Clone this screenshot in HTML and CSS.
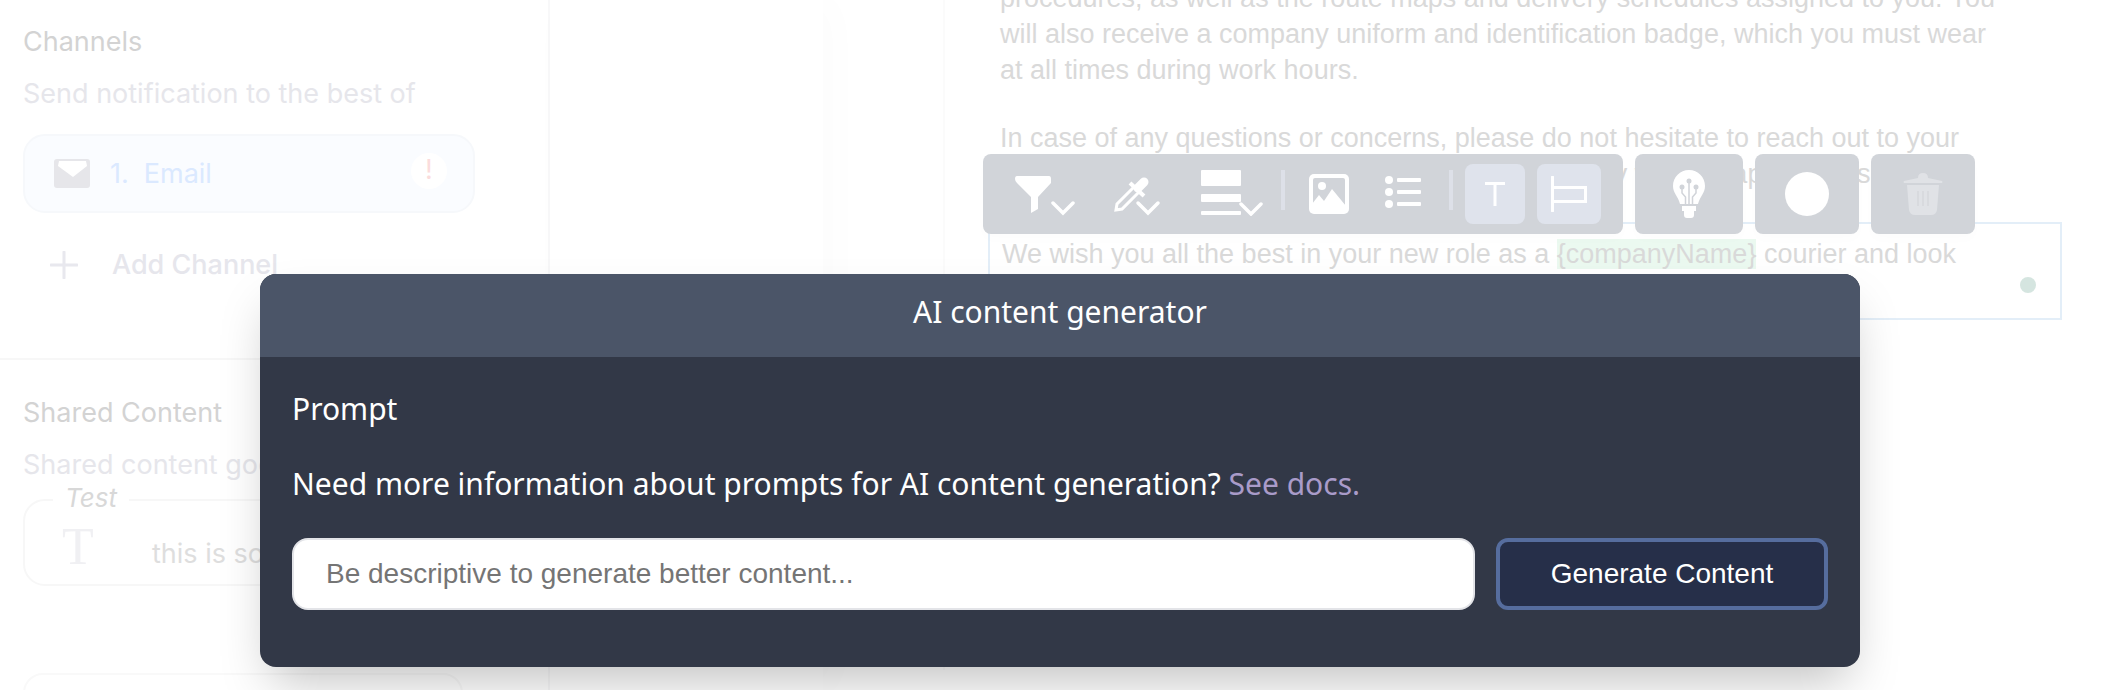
FILE: index.html
```html
<!DOCTYPE html>
<html lang="en">
<head>
    <meta charset="UTF-8">
    <meta name="viewport" content="width=device-width, initial-scale=1.0">
    <title>AI content generator</title>
    <link rel="stylesheet" href="styles.css">
</head>
<body>

<div class="app">
    <!-- Left settings column -->
    <aside class="sidebar">
        <section class="side-top">
            <h3 class="side-title">Channels</h3>
            <p class="side-note">Send notification to the best of</p>
            <div class="channel-card">
                <svg class="mail-icon" viewBox="0 0 36 29">
                    <rect width="36" height="29" rx="3" fill="#e6e6ea"/>
                    <path d="M5 2H32L33 7L19 18L4 7Z" fill="#fff"/>
                </svg>
                <span class="channel-num">1.</span>
                <span class="channel-name">Email</span>
                <span class="channel-alert">!</span>
            </div>
            <div class="add-channel">
                <svg class="plus-icon" viewBox="0 0 28 28">
                    <path d="M14 1V27M1 14H27" stroke="#e8e8ee" stroke-width="3" stroke-linecap="round"/>
                </svg>
                <span>Add Channel</span>
            </div>
        </section>
        <section class="side-bottom">
            <h3 class="side-title">Shared Content</h3>
            <p class="side-note">Shared content goes here</p>
            <div class="shared-card">
                <span class="shared-legend">Test</span>
                <span class="shared-t">T</span>
                <span class="shared-text">this is some shared content</span>
            </div>
            <div class="shared-next"></div>
        </section>
    </aside>

    <div class="spacer"></div>

    <!-- Email body -->
    <main class="main">
        <div class="letter">
            <p>procedures, as well as the route maps and delivery schedules assigned to you. You<br>will also receive a company uniform and identification badge, which you must wear<br>at all times during work hours.</p>
            <p>In case of any questions or concerns, please do not hesitate to reach out to your<br>supervisor or the human resources department, they will be happy to assist you</p>
            <div class="editor">
                <p>We wish you all the best in your new role as a <span class="tag">{companyName}</span> courier and look</p>
                <span class="editor-dot"></span>
            </div>
            <p class="sign"><span class="tag">{companyName}</span></p>
        </div>

        <!-- Floating toolbar -->
        <div class="toolbar">
            <div class="tool-group tool-main">
                <svg class="tool tool-filter" viewBox="0 0 60 40">
                    <path d="M2 0H34Q36 0 36 3V7L23 21V33L16 37V21L2 7Q0 5 0 3Q0 0 2 0Z" fill="#fff"/>
                    <path d="M38 27L48 37L58 27" class="chev"/>
                </svg>
                <svg class="tool tool-pick" viewBox="0 0 48 40">
                    <path d="M21 11L4 28L3 34L9 33L26 16" fill="none" stroke="#fff" stroke-width="3"/>
                    <path d="M17 7L31 20" stroke="#fff" stroke-width="4"/>
                    <path d="M25 12L31 6" stroke="#fff" stroke-width="9" stroke-linecap="round"/>
                    <path d="M25 27L35 37L45 27" class="chev"/>
                </svg>
                <svg class="tool tool-rows" viewBox="0 0 62 46">
                    <rect width="40" height="16" rx="1" fill="#fff"/>
                    <rect y="24" width="40" height="8" rx="1" fill="#fff"/>
                    <rect y="41" width="40" height="4" rx="1" fill="#fff"/>
                    <path d="M40 34L50 44L60 34" class="chev"/>
                </svg>
                <span class="tool-sep"></span>
                <svg class="tool tool-image" viewBox="0 0 40 40">
                    <rect width="40" height="40" rx="5" fill="#fff"/>
                    <rect x="4" y="4" width="32" height="30" rx="2" fill="#d1d4d9"/>
                    <circle cx="13" cy="12" r="4" fill="#fff"/>
                    <path d="M3 30L10 21L15 27L23 15L37 32V36H3Z" fill="#fff"/>
                </svg>
                <svg class="tool tool-list" viewBox="0 0 36 32">
                    <circle cx="4" cy="4" r="4" fill="#fff"/>
                    <circle cx="4" cy="16" r="4" fill="#fff"/>
                    <circle cx="4" cy="28" r="4" fill="#fff"/>
                    <rect x="12" y="2" width="24" height="4" rx="1" fill="#fff"/>
                    <rect x="12" y="14" width="24" height="4" rx="1" fill="#fff"/>
                    <rect x="12" y="26" width="24" height="4" rx="1" fill="#fff"/>
                </svg>
                <span class="tool-sep tool-sep-2"></span>
                <span class="tool-box tool-box-t">
                    <svg class="tool-t" viewBox="0 0 20 24">
                        <path d="M0 1.5H20M10 1.5V24" stroke="#fff" stroke-width="3"/>
                    </svg>
                </span>
                <span class="tool-box tool-box-align">
                    <svg class="tool-align" viewBox="0 0 36 36">
                        <path d="M1.5 1V35" stroke="#fff" stroke-width="3" stroke-linecap="round"/>
                        <path d="M3 11.5H34.5V25.5H3" fill="none" stroke="#fff" stroke-width="3"/>
                    </svg>
                </span>
            </div>
            <div class="tool-group tool-bulb">
                <svg class="bulb" viewBox="0 0 32 48">
                    <path d="M16 0C7 0 0 7 0 16C0 23 5 26 7 34H25C27 26 32 23 32 16C32 7 25 0 16 0Z" fill="#fff"/>
                    <path d="M9 36H23V41H21V45Q21 48 18 48H14Q11 48 11 45V41H9Z" fill="#fff"/>
                    <path d="M16 12V34M9 18V23L12.500 27V34M23 18V23L19.500 27V34" fill="none" stroke="#d1d4d9" stroke-width="1.500"/>
                    <circle cx="16" cy="11" r="2.500" fill="#d1d4d9"/>
                    <circle cx="9" cy="17" r="2.500" fill="#d1d4d9"/>
                    <circle cx="23" cy="17" r="2.500" fill="#d1d4d9"/>
                </svg>
            </div>
            <div class="tool-group tool-color"><span class="color-dot"></span></div>
            <div class="tool-group tool-trash">
                <svg class="trash" viewBox="0 0 40 42">
                    <path d="M15 5Q15 0 20 0Q25 0 25 5L39 8Q40 9 39 10H1Q0 9 1 8Z" fill="#e0e2e6"/>
                    <path d="M4 12H36L34 37Q33 42 28 42H12Q7 42 6 37Z" fill="#e0e2e6"/>
                    <path d="M15 18V33M20 18V33M25 18V33" stroke="#d8dade" stroke-width="2"/>
                </svg>
            </div>
        </div>
    </main>
</div>

<!-- Dialog -->
<div class="overlay">
    <div class="modal">
        <div class="modal-head">AI content generator</div>
        <div class="modal-body">
            <div class="modal-label">Prompt</div>
            <p class="modal-help">Need more information about prompts for AI content generation? <a class="docs-link" href="#">See docs.</a></p>
            <div class="prompt-row">
                <input class="prompt-input" type="text" placeholder="Be descriptive to generate better content...">
                <button class="prompt-btn" type="button">Generate Content</button>
            </div>
        </div>
    </div>
</div>

</body>
</html>
```

FILE: styles.css
```css
* {
    box-sizing: border-box;
}
html, body {
    margin: 0;
    height: 100%;
    overflow: hidden;
    background-color: #fff;
}
body {
    font-family: "Liberation Sans", Arial, sans-serif;
    position: relative;
}
p {
    margin: 0;
}
.app {
    display: flex;
    height: 690px;
    overflow: hidden;
}

/* sidebar */
.sidebar {
    width: 550px;
    flex: none;
    border-right: 2px solid #f8f8f9;
    font-family: Inter, sans-serif;
}
.side-top {
    height: 360px;
    padding: 25px 0 0 23px;
    border-bottom: 2px solid #f7f7f7;
}
.side-bottom {
    padding: 36px 0 0 23px;
}
.side-title {
    margin: 0;
    font-size: 27px;
    line-height: 34px;
    font-weight: 400;
    color: #d3d3d3;
}
.side-note {
    margin-top: 18px;
    font-size: 27px;
    line-height: 34px;
    color: #e6e6eb;
    white-space: nowrap;
}
.channel-card {
    display: flex;
    align-items: center;
    width: 452px;
    height: 79px;
    margin-top: 23px;
    padding: 0 26px 0 29px;
    background-color: #fafcff;
    border: 2px solid #f6f8fb;
    border-radius: 22px;
    font-size: 27px;
    color: #dbe9ff;
}
.mail-icon {
    width: 36px;
    height: 29px;
}
.channel-num {
    margin-left: 20px;
}
.channel-name {
    margin-left: 15px;
}
.channel-alert {
    margin-left: auto;
    width: 36px;
    height: 36px;
    margin-top: -6px;
    border-radius: 50%;
    background-color: #fff;
    color: #fbdcdc;
    text-align: center;
    line-height: 34px;
}
.add-channel {
    display: flex;
    align-items: center;
    margin: 38px 0 0 27px;
    font-size: 27px;
    font-weight: 500;
    color: #e6e6ec;
    line-height: 28px;
}
.plus-icon {
    width: 28px;
    height: 28px;
    margin-right: 34px;
}
.shared-card {
    position: relative;
    width: 640px;
    height: 87px;
    margin-top: 17px;
    border: 2px solid #f7f7f7;
    border-radius: 22px;
}
.shared-legend {
    position: absolute;
    left: 28px;
    top: -18px;
    padding: 0 12px 0 12px;
    background-color: #fff;
    font-style: italic;
    font-size: 26px;
    line-height: 30px;
    color: #d8d8d8;
}
.shared-t {
    position: absolute;
    left: 37px;
    top: 18px;
    font-family: "Liberation Serif", serif;
    font-size: 52px;
    line-height: 56px;
    color: #f0f0f3;
}
.shared-text {
    position: absolute;
    left: 127px;
    top: 36px;
    font-size: 27px;
    line-height: 34px;
    color: #dedede;
    white-space: nowrap;
}
.shared-next {
    width: 440px;
    height: 40px;
    margin-top: 87px;
    border: 2px solid #f9f9f9;
    border-radius: 22px;
}
.spacer {
    width: 273px;
    flex: none;
    box-shadow: 10px 0 40px rgba(0, 0, 0, 0.015);
}

/* letter */
.main {
    position: relative;
    flex: 1;
    padding-left: 120px;
}
.letter {
    height: 690px;
    margin-top: -20px;
    padding: 0 0 0 55px;
    border-left: 2px solid #fbfbfb;
    font-size: 27px;
    line-height: 36px;
    color: #d9d9d9;
    white-space: nowrap;
}
.letter p {
    margin-bottom: 32px;
}
.editor {
    position: relative;
    width: 1074px;
    height: 98px;
    margin: -2px 0 0 -12px;
    padding: 12px 0 0 12px;
    border: 2px solid #e3eef8;
}
.tag {
    background-color: #ebf9f0;
}
.editor-dot {
    position: absolute;
    right: 24px;
    top: 53px;
    width: 16px;
    height: 16px;
    border-radius: 50%;
    background-color: #d5e5e0;
}
.sign {
    margin-top: 288px;
}
.sign .tag {
    background-color: #dfe8e2;
}

/* toolbar sits over the letter */
.toolbar {
    position: absolute;
    left: 160px;
    top: 154px;
    display: flex;
    gap: 12px;
    height: 80px;
}
.tool-group {
    display: flex;
    align-items: center;
    justify-content: center;
    height: 80px;
    background-color: #d1d4d9;
    border-radius: 8px;
    box-shadow: 0 6px 12px rgba(0, 0, 0, 0.01);
}
.tool-main {
    position: relative;
    width: 640px;
}
.chev {
    fill: none;
    stroke: #fff;
    stroke-width: 3.5;
    stroke-linecap: round;
}
.tool {
    position: absolute;
}
.tool-filter {
    left: 32px;
    top: 22px;
    width: 60px;
    height: 40px;
}
.tool-pick {
    left: 130px;
    top: 22px;
    width: 48px;
    height: 40px;
}
.tool-rows {
    left: 218px;
    top: 16px;
    width: 62px;
    height: 46px;
}
.tool-sep {
    position: absolute;
    left: 298px;
    top: 16px;
    width: 4px;
    height: 40px;
    background-color: #dde0e8;
}
.tool-sep-2 {
    left: 466px;
}
.tool-image {
    left: 326px;
    top: 20px;
    width: 40px;
    height: 40px;
}
.tool-list {
    left: 402px;
    top: 22px;
    width: 36px;
    height: 32px;
}
.tool-box {
    position: absolute;
    top: 10px;
    display: flex;
    align-items: center;
    justify-content: center;
    height: 60px;
    background-color: #dfe3ec;
    border-radius: 8px;
}
.tool-box-t {
    left: 482px;
    width: 60px;
}
.tool-box-align {
    left: 554px;
    width: 64px;
}
.tool-t {
    width: 20px;
    height: 24px;
}
.tool-align {
    width: 36px;
    height: 36px;
}
.tool-bulb {
    width: 108px;
}
.bulb {
    width: 32px;
    height: 48px;
}
.tool-color, .tool-trash {
    width: 104px;
}
.color-dot {
    width: 44px;
    height: 44px;
    border-radius: 50%;
    background-color: #fff;
}
.trash {
    width: 40px;
    height: 42px;
}

/* dialog */
.overlay {
    position: absolute;
    top: 0;
    left: 0;
    right: 0;
    bottom: 0;
    padding: 274px 0 0 260px;
}
.modal {
    width: 1600px;
    height: 393px;
    background-color: #323847;
    border-radius: 16px;
    overflow: visible;
    box-shadow: 0 25px 50px -12px rgba(0, 0, 0, 0.25);
    font-family: "Noto Sans", sans-serif;
    color: #fff;
}
.modal-head {
    height: 83px;
    background-color: #4b5568;
    border-radius: 16px 16px 0 0;
    text-align: center;
    line-height: 76px;
    font-size: 30px;
}
.modal-body {
    padding: 32px;
}
.modal-label {
    font-size: 30px;
    line-height: 40px;
}
.modal-help {
    margin-top: 35px;
    font-size: 30px;
    line-height: 40px;
}
.docs-link {
    color: #a99bc9;
    text-decoration: none;
}
.prompt-row {
    display: flex;
    gap: 21px;
    margin-top: 34px;
}
.prompt-input {
    flex: 1;
    height: 72px;
    padding: 0 32px;
    border: 2px solid #e3e4e8;
    border-radius: 16px;
    background-color: #fff;
    font-family: "Liberation Sans", Arial, sans-serif;
    font-size: 28px;
}
.prompt-input::placeholder {
    color: #757575;
    opacity: 1;
}
.prompt-btn {
    width: 332px;
    height: 72px;
    background-color: #262f49;
    border: 4px solid #566d9e;
    border-radius: 12px;
    color: #fff;
    font-family: "Liberation Sans", Arial, sans-serif;
    font-size: 28px;
}
```
